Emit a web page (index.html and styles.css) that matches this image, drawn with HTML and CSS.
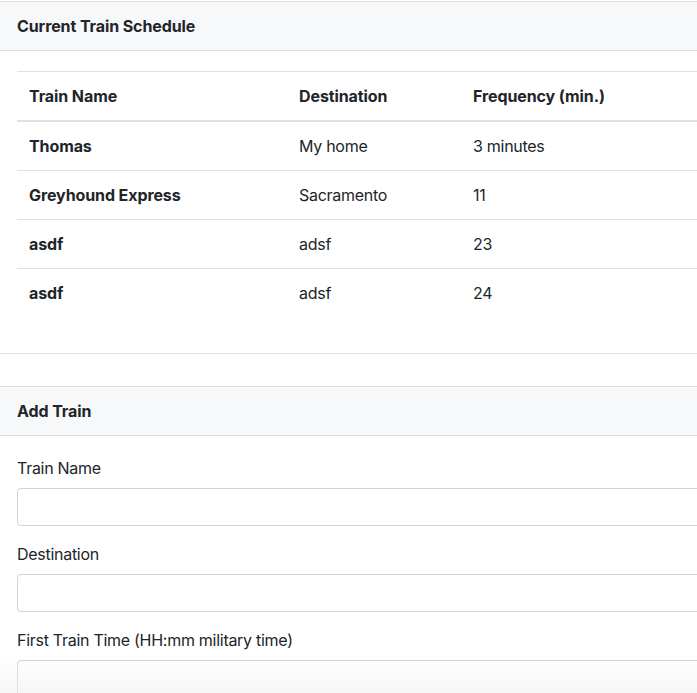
FILE: index.html
```html
<!DOCTYPE html>
<html lang="en">
<head>
<meta charset="utf-8">
<title>Train Scheduler</title>
<link rel="stylesheet" href="styles.css">
</head>
<body>
<div class="page">
  <section class="card">
    <div class="card-header">Current Train Schedule</div>
    <div class="card-body">
      <table class="table">
        <colgroup>
          <col class="col-name">
          <col class="col-dest">
          <col>
        </colgroup>
        <thead>
          <tr><th>Train Name</th><th>Destination</th><th>Frequency (min.)</th></tr>
        </thead>
        <tbody>
          <tr><th>Thomas</th><td>My home</td><td>3 minutes</td></tr>
          <tr><th>Greyhound Express</th><td>Sacramento</td><td>11</td></tr>
          <tr><th>asdf</th><td>adsf</td><td>23</td></tr>
          <tr><th>asdf</th><td>adsf</td><td>24</td></tr>
        </tbody>
      </table>
    </div>
  </section>

  <section class="card">
    <div class="card-header">Add Train</div>
    <div class="card-body">
      <form>
        <div class="form-group">
          <label for="name">Train Name</label>
          <input id="name" class="form-control" type="text">
        </div>
        <div class="form-group">
          <label for="dest">Destination</label>
          <input id="dest" class="form-control" type="text">
        </div>
        <div class="form-group">
          <label for="time">First Train Time (HH:mm military time)</label>
          <input id="time" class="form-control" type="text">
        </div>
      </form>
    </div>
  </section>
</div>
<div class="fade-bottom"></div>
</body>
</html>
```

FILE: styles.css
```css
html, body {
  margin: 0;
  padding: 0;
  overflow: hidden;
  background: #fff;
}
body {
  font-family: Inter, "Liberation Sans", sans-serif;
  font-size: 16px;
  line-height: 24px;
  color: #212529;
  letter-spacing: -0.28px;
}
.page {
  margin-left: -4px;
  padding-top: 1px;
  width: 760px;
}
.card {
  border: 1px solid #dfdfdf;
  border-radius: 4px;
  margin-bottom: 32px;
  background: #fff;
}
.card-header {
  padding: 12px 20px;
  background: #f7f8f9;
  border-bottom: 1px solid #dfdfdf;
  font-weight: 700;
  letter-spacing: -0.1px;
}
.card-body {
  padding: 20px;
}
.table {
  width: 100%;
  border-collapse: collapse;
  table-layout: fixed;
  margin-bottom: 16px;
}
.col-name { width: 270px; }
.col-dest { width: 174px; }
.table th, .table td {
  padding: 12px;
  text-align: left;
  vertical-align: top;
  border-top: 1px solid #dee2e6;
}
.table th {
  font-weight: 700;
  letter-spacing: -0.1px;
}
.table td { font-weight: 400; }
.table thead th {
  border-bottom: 2px solid #dee2e6;
}
.form-group {
  margin-bottom: 16px;
}
label {
  display: block;
  margin-bottom: 8px;
}
.form-control {
  display: block;
  box-sizing: border-box;
  width: 100%;
  height: 38px;
  padding: 6px 12px;
  font: inherit;
  border: 1px solid #ced4da;
  border-radius: 4px;
  background: #fff;
}
.fade-bottom {
  position: fixed;
  left: 0;
  right: 0;
  bottom: 0;
  height: 34px;
  background: linear-gradient(to bottom, rgba(245,245,245,0), rgba(240,240,240,0.6));
  pointer-events: none;
}
```
